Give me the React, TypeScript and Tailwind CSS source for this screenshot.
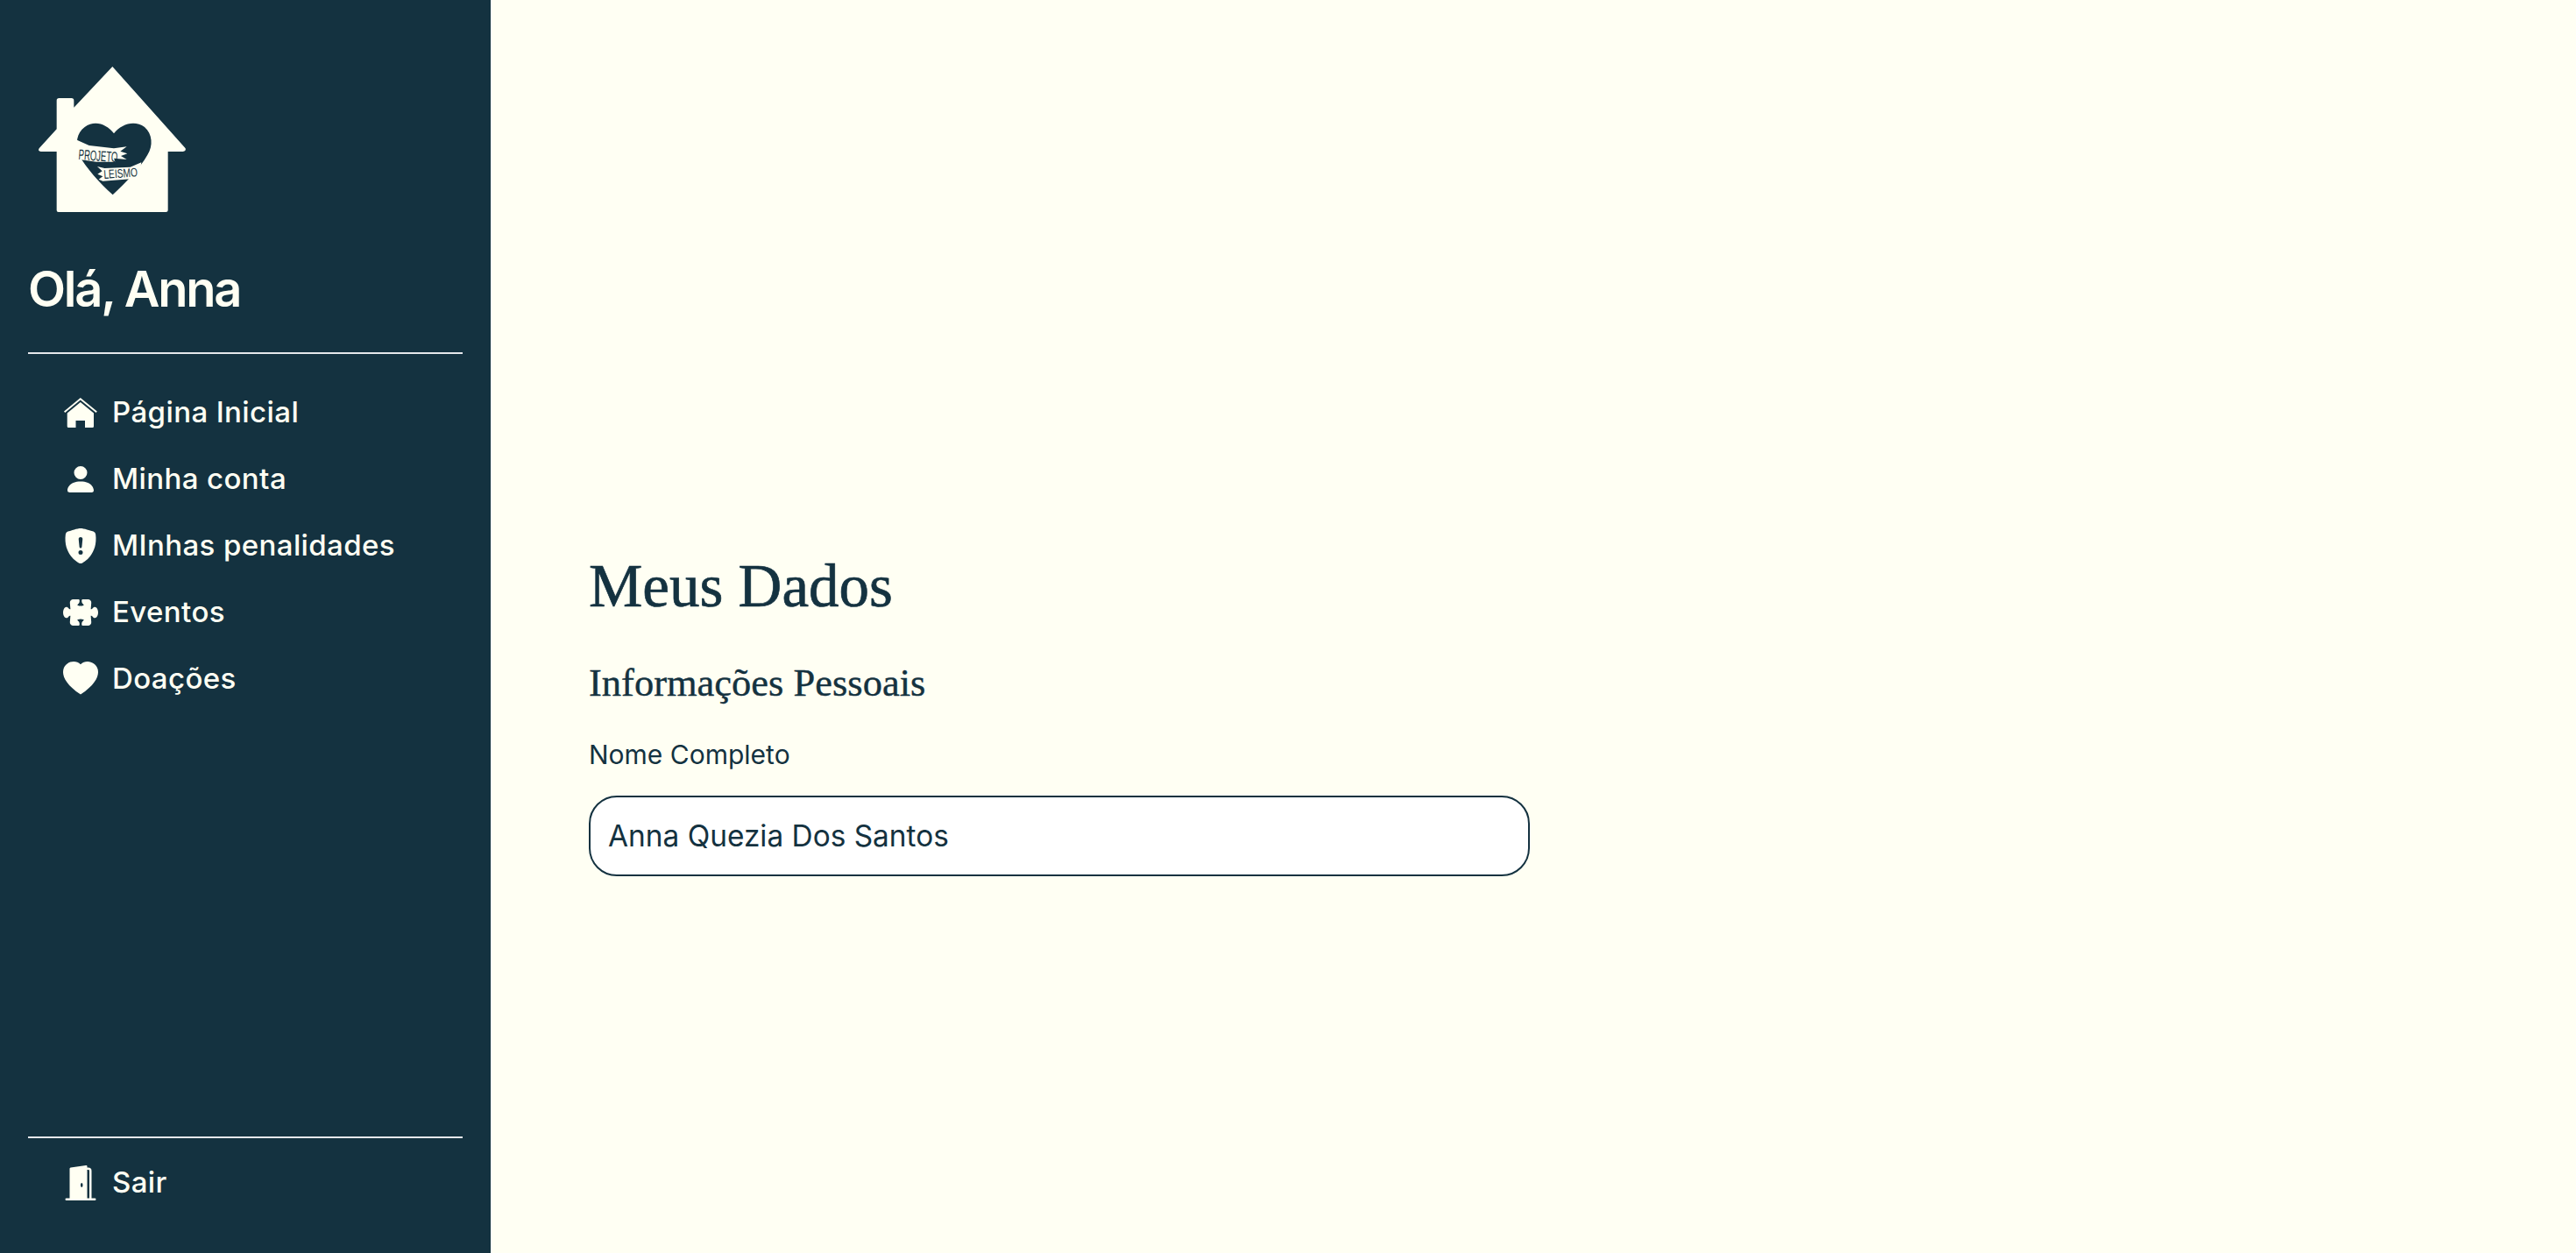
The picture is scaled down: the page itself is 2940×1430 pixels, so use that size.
import { BsDoorOpenFill, BsHeartFill, BsPersonFill, BsPuzzleFill, BsShieldFillExclamation } from "react-icons/bs"

const HomeIcon = ({ size, className }: { size?: number; className?: string }) => (
  <svg viewBox="0 0 40 40" width={size} height={size} className={className} fill="currentColor">
    <path d="M19.8 3 L38.8 18.6 L37.6 20 L19.8 5.6 L2.2 20 L1 18.6 Z" />
    <path d="M19.8 8 L35 20.4 L35 35.5 Q35 37 33.5 37 L25 37 L25 29 L14.5 29 L14.5 37 L6.2 37 Q4.7 37 4.7 35.5 L4.7 20.4 Z" />
  </svg>
)

const links = [
  { label: "Página Inicial", icon: HomeIcon },
  { label: "Minha conta", icon: BsPersonFill },
  { label: "MInhas penalidades", icon: BsShieldFillExclamation },
  { label: "Eventos", icon: BsPuzzleFill },
  { label: "Doações", icon: BsHeartFill },
]

const Logo = () => (
  <svg viewBox="0 0 570 540" className="w-[190px] h-[180px] block -ml-[2px]">
    <path
      d="M295 18 L545 298 Q548 308 536 309 L485 309 L485 510 Q485 516 478 516 L110 516 Q104 516 104 510 L104 309 L50 309 Q38 308 44 298 L104 232 L104 134 Q104 126 112 126 L155 126 Q163 126 163 134 L163 158 Z"
      fill="#fffff3"
    />
    <path
      d="M296 457 C250 415 205 365 180 320 C168 280 172 245 200 225 C235 200 275 215 300 247 C325 215 370 200 405 225 C432 248 435 290 415 320 C390 365 340 415 296 457 Z"
      fill="#143240"
    />
    <path d="M170 268 L215 288 L300 298 L344 292 L322 308 L346 316 L324 324 L344 336 L300 332 L305 344 L240 344 L182 336 L172 300 Z" fill="#fffff3" />
    <text x="178" y="336" fontSize="50" fontFamily="Liberation Sans, sans-serif" fill="#143240" textLength="134" lengthAdjust="spacingAndGlyphs" transform="rotate(4 178 336)">
      PROJETO
    </text>
    <path d="M243 360 L268 366 L356 362 L394 346 L387 386 L366 402 L262 410 L248 404 L262 394 L244 386 L260 376 Z" fill="#fffff3" />
    <text x="266" y="402" fontSize="42" fontFamily="Liberation Sans, sans-serif" fill="#143240" textLength="116" lengthAdjust="spacingAndGlyphs" transform="rotate(-4 266 402)">
      LEISMO
    </text>
  </svg>
)

const NavItem = ({ label, icon: Icon }: { label: string; icon: typeof HomeIcon }) => (
  <a href="#" className="flex items-center h-[76px] gap-[16px] pl-[40px] text-[33px] font-medium tracking-[0.4px] whitespace-nowrap">
    <Icon size={40} className="shrink-0" />
    <span>{label}</span>
  </a>
)

export default function App() {
  return (
    <div className="flex h-[1430px] bg-[#fffff3] font-['Inter',sans-serif] text-[#143240]">
      <aside className="flex flex-col w-[560px] shrink-0 bg-[#143240] text-[#fffff3] px-8 pt-[70px]">
        <Logo />
        <h2 className="mt-[46px] text-[56px] leading-[68px] font-semibold tracking-[-2.2px]">Olá, Anna</h2>
        <hr className="mt-[38px] border-0 h-[2px] bg-[#e5e7eb]" />
        <nav className="flex flex-col mt-[29px]">
          {links.map((link) => (
            <NavItem key={link.label} {...link} />
          ))}
        </nav>
        <div className="mt-auto pb-[42px]">
          <hr className="border-0 h-[2px] bg-[#e5e7eb] mb-[13px]" />
          <NavItem label="Sair" icon={BsDoorOpenFill} />
        </div>
      </aside>
      <main className="flex-1 pl-[112px] pt-[627px]">
        <h1 className="font-['Liberation_Serif',serif] text-[69px] leading-[84px] [-webkit-text-stroke:0.7px]">Meus Dados</h1>
        <h3 className="mt-[40px] font-['Liberation_Serif',serif] text-[44.5px] leading-[56px] [-webkit-text-stroke:0.4px]">Informações Pessoais</h3>
        <label className="block mt-[34px] text-[30px] leading-[40px]">Nome Completo</label>
        <div className="flex items-center mt-[27px] w-[1074px] h-[92px] rounded-[32px] border-2 border-[#143240] bg-white px-[20px] text-[33.4px]">
          Anna Quezia Dos Santos
        </div>
      </main>
    </div>
  )
}
